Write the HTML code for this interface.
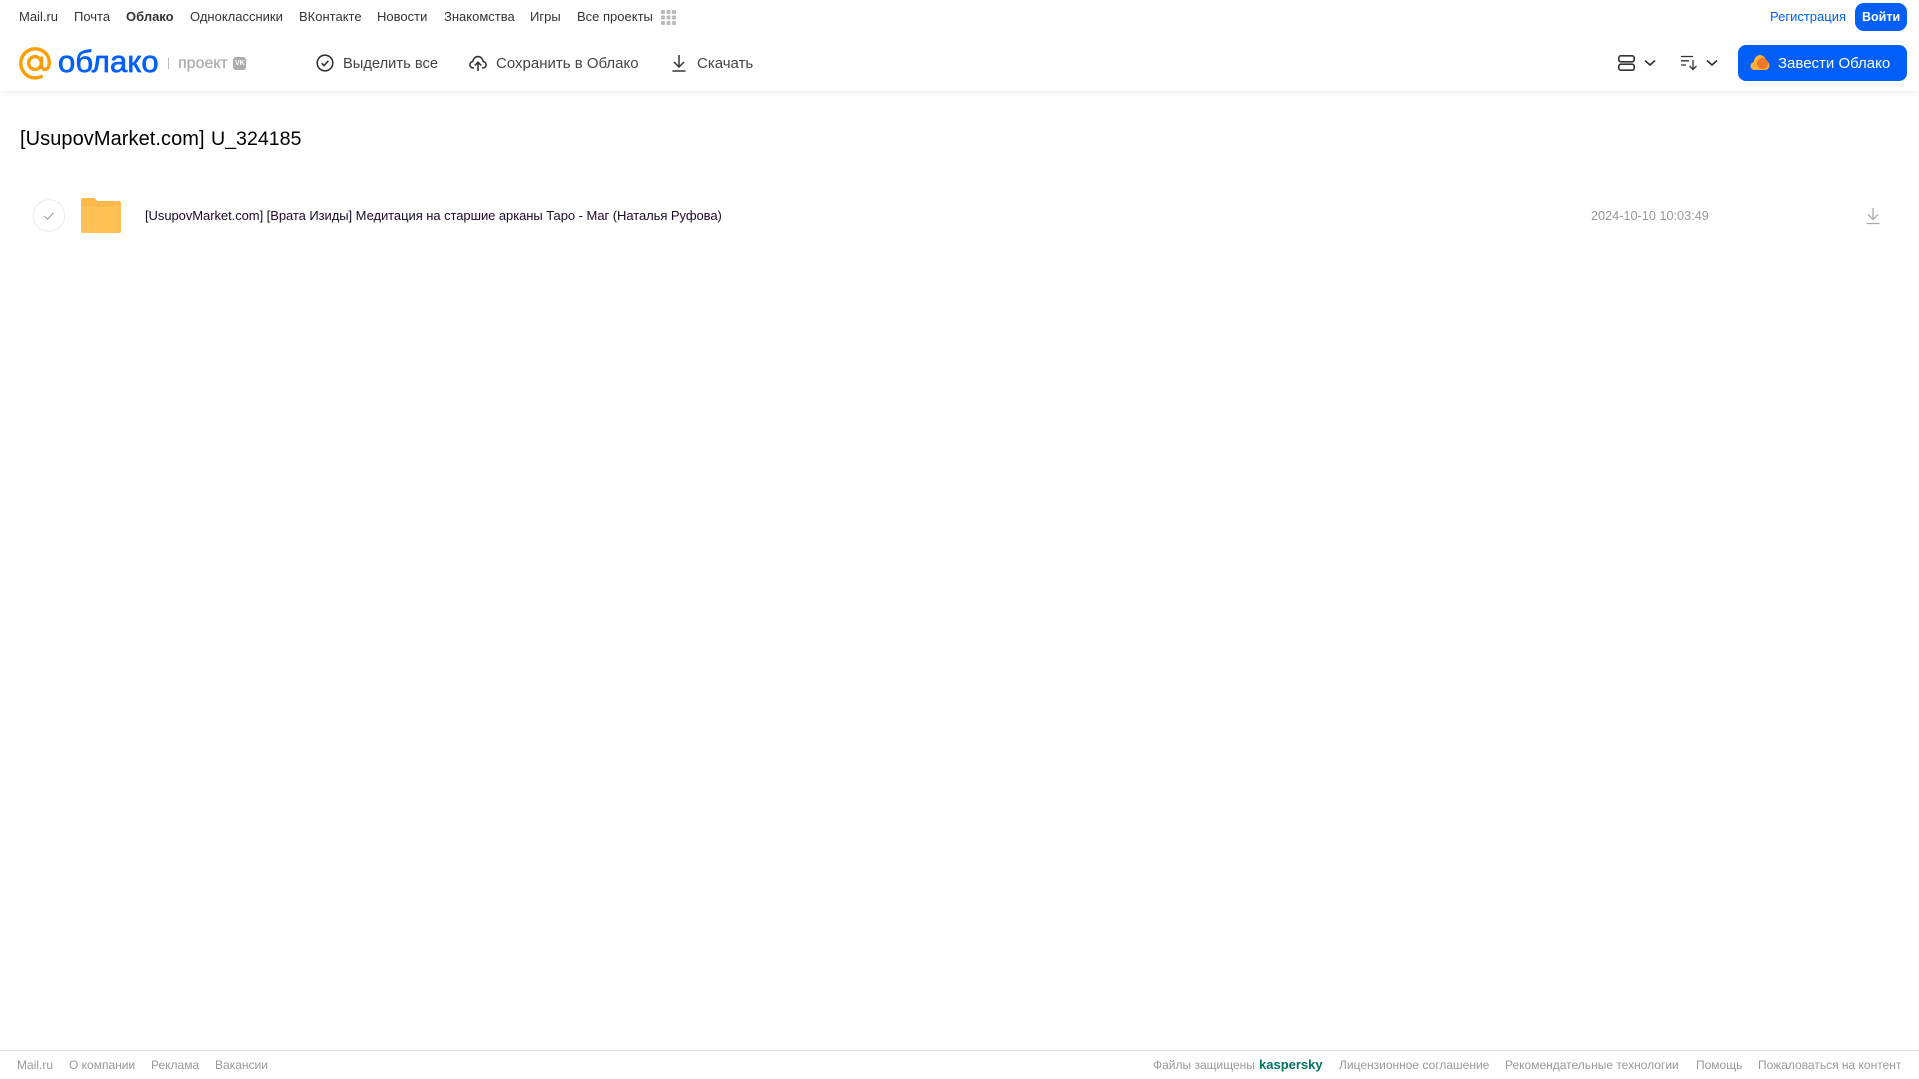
<!DOCTYPE html>
<html lang="ru">
<head>
<meta charset="utf-8">
<title>Облако</title>
<style>
html,body{margin:0;padding:0;background:#fff;width:1919px;height:1079px;overflow:hidden;font-family:"Liberation Sans",Arial,sans-serif}
.t{position:absolute;white-space:nowrap;line-height:16px}
.n{top:9px;font-size:13px;color:#333}
.b{top:56px;font-size:15px;color:#444}
.f{top:1057px;font-size:12px;color:#999}
svg{position:absolute;overflow:visible}
#hdr{position:absolute;left:0;top:0;width:1919px;height:91px;background:#fff;box-shadow:0 1px 6px rgba(0,0,0,.08)}
</style>
</head>
<body>
<div id="hdr"></div>

<span class="t n" style="left:19px">Mail.ru</span>
<span class="t n" style="left:74px">Почта</span>
<span class="t n" style="left:126px;font-weight:bold">Облако</span>
<span class="t n" style="left:190px">Одноклассники</span>
<span class="t n" style="left:299px">ВКонтакте</span>
<span class="t n" style="left:377px">Новости</span>
<span class="t n" style="left:444px">Знакомства</span>
<span class="t n" style="left:530px">Игры</span>
<span class="t n" style="left:577px">Все проекты</span>
<svg style="left:661px;top:10px" width="15" height="15" fill="#bbb">
<rect x="0" y="0" width="4" height="4" rx="1"/><rect x="5.5" y="0" width="4" height="4" rx="1"/><rect x="11" y="0" width="4" height="4" rx="1"/>
<rect x="0" y="5.5" width="4" height="4" rx="1"/><rect x="5.5" y="5.5" width="4" height="4" rx="1"/><rect x="11" y="5.5" width="4" height="4" rx="1"/>
<rect x="0" y="11" width="4" height="4" rx="1"/><rect x="5.5" y="11" width="4" height="4" rx="1"/><rect x="11" y="11" width="4" height="4" rx="1"/>
</svg>

<span class="t n" style="left:1770px;color:#005ff9">Регистрация</span>
<div style="position:absolute;left:1855px;top:3px;width:52px;height:28px;background:#005ff9;border-radius:9px"></div>
<span class="t n" style="left:1862px;color:#fff;font-weight:bold;font-size:12.5px">Войти</span>

<svg style="left:19px;top:47px" width="33" height="33" viewBox="0 0 33 33" fill="none" stroke="#ff9e00" stroke-width="3.4">
<circle cx="16" cy="16" r="6.4"/>
<path d="M22.400 9.600v8.600c0 2.600 1.600 4.200 3.600 4.200 2.600 0 4.300-2.600 4.300-6.400C30.300 7.600 24.100 1.800 16 1.800 8.100 1.800 1.800 8.400 1.800 16.300s6.300 14.600 14.200 14.600c3 0 5.400-.7 7.600-2"/>
</svg>
<span class="t" style="left:58px;top:44px;font-size:31px;line-height:36px;color:#005ff9;-webkit-text-stroke:.7px #005ff9;letter-spacing:.1px">облако</span>
<div style="position:absolute;left:168px;top:58px;width:1px;height:11px;background:#bbb"></div>
<span class="t" style="left:178px;top:56px;font-size:16px;color:#adadad;-webkit-text-stroke:.3px #adadad">проект</span>
<div style="position:absolute;left:233px;top:57px;width:13px;height:13px;background:#adadad;border-radius:3px"></div>
<span class="t" style="left:235px;top:57px;font-size:7px;line-height:13px;font-weight:bold;color:#fff">VK</span>

<svg style="left:316px;top:54px" width="18" height="18" viewBox="0 0 18 18" fill="none" stroke="#333" stroke-width="1.6">
<circle cx="9" cy="9" r="7.8"/><path d="M5.600 9.200l2.400 2.400 4.400-4.800"/>
</svg>
<span class="t b" style="left:343px;font-size:14.700px">Выделить все</span>

<svg style="left:469px;top:54px" width="18" height="18" viewBox="0 0 18 18" fill="none" stroke="#333" stroke-width="1.6">
<path d="M5 14H4.200C2.300 14 .9 12.500.9 10.800c0-1.700 1.200-3 2.800-3.200C4.200 4.600 6.400 2.600 9 2.600s4.800 2 5.300 5c1.600.2 2.800 1.500 2.800 3.200 0 1.700-1.400 3.200-3.300 3.200H13"/>
<path d="M9 17V8.500M5.800 11.400L9 8.200l3.200 3.200"/>
</svg>
<span class="t b" style="left:496px">Сохранить в Облако</span>

<svg style="left:671px;top:54px" width="16" height="18" viewBox="0 0 16 18" fill="none" stroke="#333" stroke-width="1.5">
<path d="M8 1v11.500M3 8l5 5 5-5M1.500 17h13"/>
</svg>
<span class="t b" style="left:697px">Скачать</span>

<svg style="left:1618px;top:55px" width="17" height="16" viewBox="0 0 17 16" fill="none" stroke="#333" stroke-width="1.6">
<rect x=".8" y=".8" width="15.400" height="6" rx="2"/><rect x=".8" y="9.200" width="15.400" height="6" rx="2"/>
</svg>
<svg style="left:1644px;top:59px" width="12" height="8" viewBox="0 0 12 8" fill="none" stroke="#333" stroke-width="1.7"><path d="M1 1.500l5 4.500 5-4.500"/></svg>

<svg style="left:1681px;top:55px" width="17" height="16" viewBox="0 0 17 16" fill="none" stroke="#333" stroke-width="1.3">
<path d="M0 1.500h12M0 5.800h8M0 10h5M12 5v9.500M8.500 11l3.500 3.500L15.500 11"/>
</svg>
<svg style="left:1706px;top:59px" width="12" height="8" viewBox="0 0 12 8" fill="none" stroke="#333" stroke-width="1.7"><path d="M1 1.500l5 4.500 5-4.500"/></svg>

<div style="position:absolute;left:1738px;top:45px;width:169px;height:36px;background:#005ff9;border-radius:8px"></div>
<svg style="left:1750px;top:54px" width="20" height="17" viewBox="0 0 20 17">
<path d="M4.500 16C2 16 .5 14 .5 12c0-2 1.300-3.600 3.200-3.900C4.200 4 7 1 10 1s5.600 2.600 6 5.600c2 .6 3.400 2.700 3.400 4.900 0 2.500-2 4.500-4.500 4.500z" fill="#ffb03a"/>
<circle cx="12.500" cy="9.500" r="5.500" fill="#f4772a"/>
</svg>
<span class="t" style="left:1778px;top:56px;font-size:15px;color:#fff">Завести Облако</span>

<span class="t" style="left:20px;top:127px;font-size:20px;line-height:24px;color:#000;letter-spacing:.07px">[UsupovMarket.com]</span>
<span class="t" style="left:211px;top:127px;font-size:19.600px;line-height:24px;color:#000">U_324185</span>

<svg style="left:33px;top:199px" width="33" height="33" viewBox="0 0 33 33" fill="none">
<circle cx="16" cy="16.500" r="15.800" stroke="#ebebeb" stroke-width="1"/>
<path d="M11.300 17l3.200 3.200 6-6.500" stroke="#aaa" stroke-width="1.200"/>
</svg>
<svg style="left:81px;top:198px" width="40" height="35" viewBox="0 0 40 35">
<path d="M2 0h10c2 0 3 1 4 3h22c1.200 0 2 .8 2 2v28c0 1.200-.8 2-2 2H2c-1.200 0-2-.8-2-2V2C0 .8.800 0 2 0z" fill="#ffb94a"/>
<path d="M0 8h40v25c0 1.200-.8 2-2 2H2c-1.200 0-2-.8-2-2z" fill="#ffc155"/>
</svg>
<span class="t" style="left:145px;top:208px;font-size:13px;letter-spacing:-.06px;color:#1a0a26">[UsupovMarket.com] [Врата Изиды] Медитация на старшие арканы Таро - Маг (Наталья Руфова)</span>
<span class="t" style="left:1591px;top:208px;font-size:12.700px;color:#999">2024-10-10 10:03:49</span>
<svg style="left:1866px;top:207px" width="14" height="18" viewBox="0 0 14 18" fill="none" stroke="#aaa" stroke-width="1.300">
<path d="M7 1v11M2 7.500l5 5 5-5M.5 16.500h13"/>
</svg>

<div style="position:absolute;left:0;top:1050px;width:1919px;height:1px;background:#dcdcdc"></div>
<span class="t f" style="left:17px">Mail.ru</span>
<span class="t f" style="left:69px">О компании</span>
<span class="t f" style="left:151px">Реклама</span>
<span class="t f" style="left:215px">Вакансии</span>
<span class="t f" style="left:1153px">Файлы защищены</span>
<span class="t f" style="left:1259px;font-size:13px;font-weight:bold;color:#00745f">kaspersky</span>
<span class="t f" style="left:1339px">Лицензионное соглашение</span>
<span class="t f" style="left:1505px">Рекомендательные технологии</span>
<span class="t f" style="left:1696px">Помощь</span>
<span class="t f" style="left:1758px">Пожаловаться на контент</span>
</body>
</html>
